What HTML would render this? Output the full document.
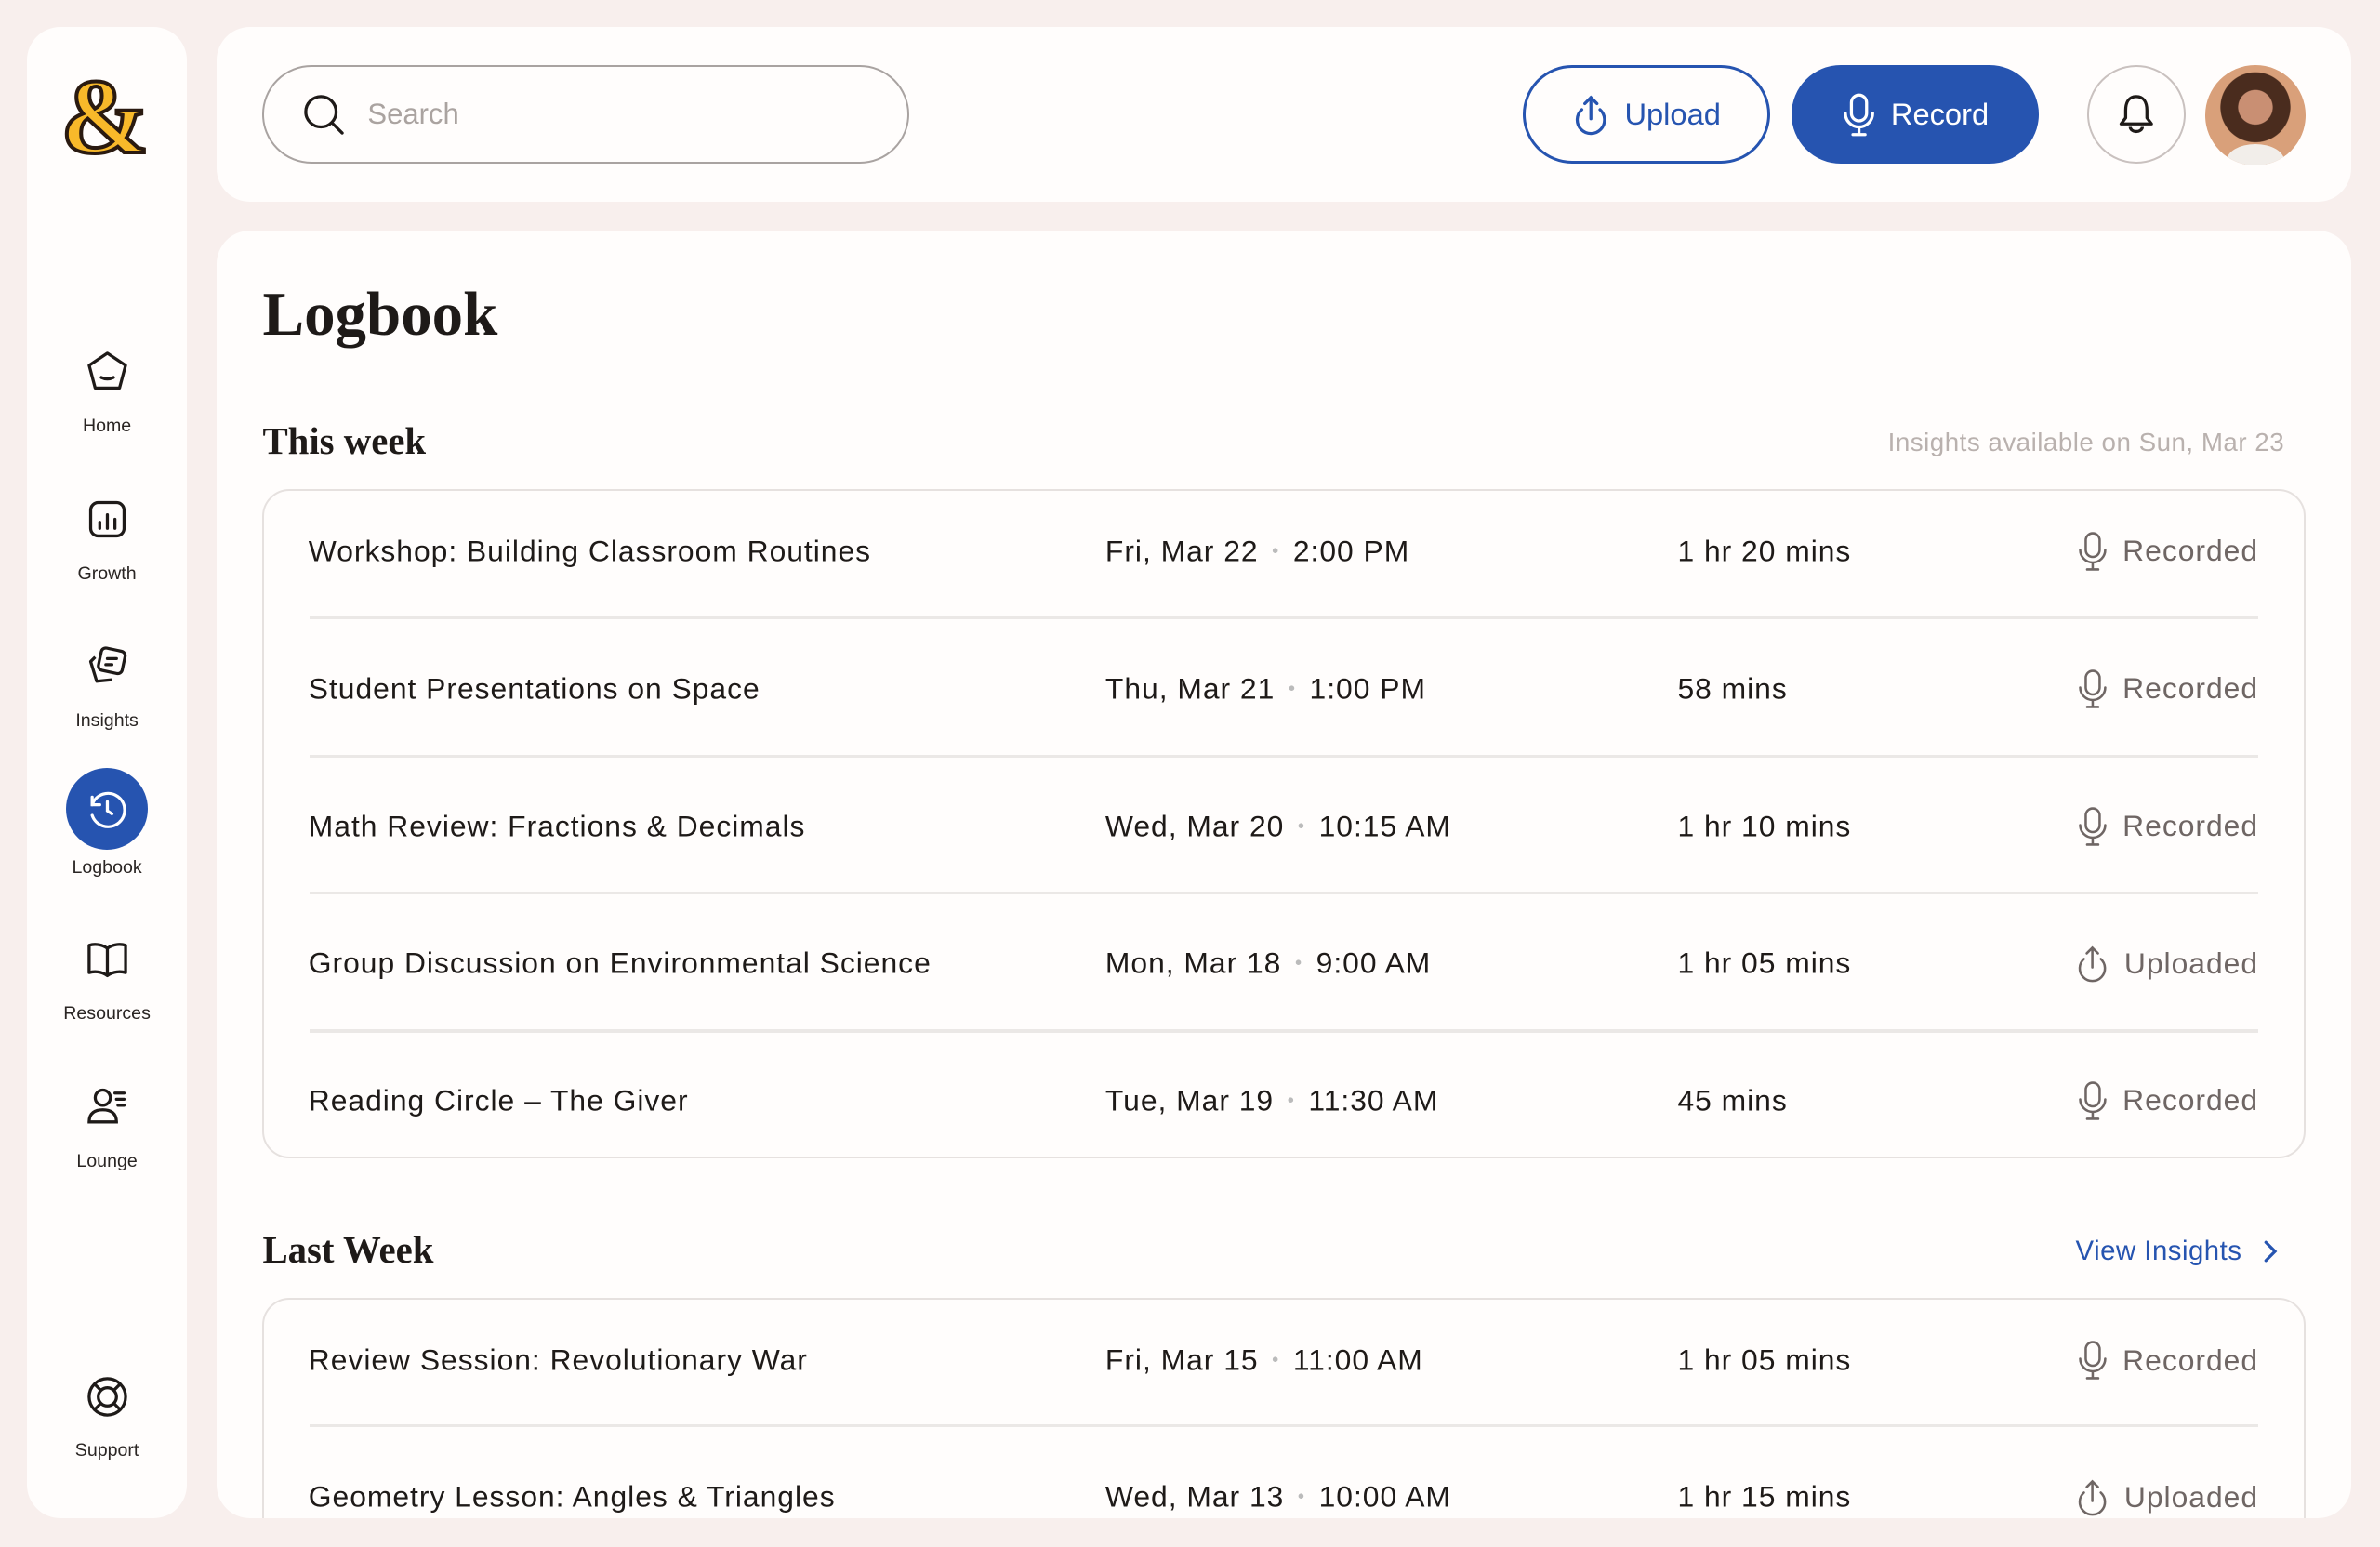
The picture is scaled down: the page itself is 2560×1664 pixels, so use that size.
<!DOCTYPE html>
<html><head><meta charset="utf-8"><style>
*{box-sizing:border-box;margin:0;padding:0}
html,body{width:2560px;height:1664px;overflow:hidden;background:#f8efed}
#w{zoom:1.632653;width:1568px;height:1019px;position:relative;overflow:hidden;font-family:"Liberation Sans",sans-serif;color:#1e1a18}
.card{position:absolute;background:#fffdfc;border-radius:22px}
.nav{position:absolute;left:0;width:105px;text-align:center;font-size:12px;color:#2a2523}
.nav svg{display:block;margin:0 auto}
.abs{position:absolute}
.row{position:absolute;left:0;right:0;height:90px;font-size:19.5px;letter-spacing:.6px}
.row span{position:absolute;top:50%;transform:translateY(-50%);white-space:nowrap}
.st{right:30px;color:#6f6664;display:flex;align-items:center;gap:9px}
.dot{color:#bbb;font-size:12px;margin:0 3px;vertical-align:3px}
.div{position:absolute;left:30px;right:30px;height:2px;background:#ebe8e6}
h2{font-family:"Liberation Serif",serif;font-weight:bold;font-size:25px;position:absolute}
</style></head><body><div id="w">
<div class="card" style="left:18px;top:18px;width:105px;height:982px">
 <div class="abs" style="left:22px;top:24px;font-family:'Liberation Serif',serif;font-weight:bold;font-size:70px;line-height:70px;color:#f8b92a;-webkit-text-stroke:2.5px #2a1a10">&amp;</div>
 <div class="nav" style="top:212px"><svg width="30" height="30" viewBox="0 0 30 30" fill="none" stroke="#1e1a18" stroke-width="2" stroke-linejoin="round"><path d="M15 3 L27 11 L23 26 H7 L3 11 Z"/><path d="M11 19 q4 2 8 0" stroke-linecap="round"/></svg><div style="margin-top:14px">Home</div></div>
 <div class="nav" style="top:309px"><svg width="30" height="30" viewBox="0 0 30 30" fill="none" stroke="#1e1a18" stroke-width="2"><rect x="4" y="4" width="22" height="22" rx="5"/><path d="M10 17v4M15 12v9M20 15v6" stroke-linecap="round"/></svg><div style="margin-top:14px">Growth</div></div>
 <div class="nav" style="top:406px"><svg width="30" height="30" viewBox="0 0 30 30" fill="none" stroke="#1e1a18" stroke-width="2" stroke-linejoin="round"><rect x="10" y="4" width="16" height="15" rx="3" transform="rotate(12 18 11)"/><path d="M7 9 L4 12 L8 25 L18 24"/><path d="M15 10h6M14 14h4" stroke-linecap="round"/></svg><div style="margin-top:14px">Insights</div></div>
 <div class="nav" style="top:488px"><div style="width:54px;height:54px;border-radius:50%;background:#2654b0;margin:0 auto;display:flex;align-items:center;justify-content:center"><svg width="30" height="30" viewBox="0 0 30 30" fill="none" stroke="#fff" stroke-width="2" stroke-linecap="round"><path d="M5 12 A11 11 0 1 1 5 19"/><path d="M5 7v5h5"/><path d="M15 10v6l3 2"/></svg></div><div style="margin-top:5px">Logbook</div></div>
 <div class="nav" style="top:599px"><svg width="30" height="30" viewBox="0 0 30 30" fill="none" stroke="#1e1a18" stroke-width="2" stroke-linejoin="round"><path d="M15 8 C11 5 6 5 3 6 V24 C6 23 11 23 15 26 C19 23 24 23 27 24 V6 C24 5 19 5 15 8 Z M15 8 V26"/></svg><div style="margin-top:14px">Resources</div></div>
 <div class="nav" style="top:696px"><svg width="30" height="30" viewBox="0 0 30 30" fill="none" stroke="#1e1a18" stroke-width="2" stroke-linecap="round"><circle cx="12" cy="9" r="5"/><path d="M3 25 c0-6 4-8 9-8s9 2 9 8z"/><path d="M20 6h6M21 10h5M22 14h4"/></svg><div style="margin-top:14px">Lounge</div></div>
 <div class="nav" style="top:887px"><svg width="30" height="30" viewBox="0 0 30 30" fill="none" stroke="#1e1a18" stroke-width="2"><circle cx="15" cy="15" r="12"/><circle cx="15" cy="15" r="6"/><path d="M6.5 6.5l4.5 4.5M23.5 6.5 19 11M6.5 23.5 11 19M23.5 23.5 19 19"/></svg><div style="margin-top:14px">Support</div></div>
</div>
<div class="card" style="left:143px;top:18px;width:1406px;height:115px">
 <div class="abs" style="left:30px;top:25px;width:426px;height:65px;border:1.5px solid #a9a3a1;border-radius:33px;display:flex;align-items:center;padding-left:24px;gap:14px;font-size:19px;color:#aaa3a0"><svg width="30" height="30" viewBox="0 0 30 30" fill="none" stroke="#1e1a18" stroke-width="2" stroke-linecap="round"><circle cx="13" cy="13" r="10"/><path d="M21 21l6 6"/></svg>Search</div>
 <div class="abs" style="left:860px;top:25px;width:163px;height:65px;border:2px solid #2654b0;border-radius:33px;display:flex;align-items:center;justify-content:center;gap:9px;font-size:20px;color:#2654b0"><svg width="26" height="28" viewBox="0 0 26 28" fill="none" stroke="#2654b0" stroke-width="2" stroke-linecap="round"><path d="M7 11 A9 9 0 1 0 19 11"/><path d="M13 17V3M9 7l4-4 4 4"/></svg>Upload</div>
 <div class="abs" style="left:1037px;top:25px;width:163px;height:65px;background:#2654b0;border-radius:33px;display:flex;align-items:center;justify-content:center;gap:9px;font-size:20px;color:#fff"><svg width="24" height="30" viewBox="0 0 24 30" fill="none" stroke="#fff" stroke-width="2" stroke-linecap="round"><rect x="7" y="2" width="10" height="17" rx="5"/><path d="M3 14a9 9 0 0 0 18 0M12 23v5M8 28h8"/></svg>Record</div>
 <div class="abs" style="left:1232px;top:25px;width:65px;height:65px;border:1.5px solid #c9c1bf;border-radius:50%;display:flex;align-items:center;justify-content:center"><svg width="28" height="30" viewBox="0 0 28 30" fill="none" stroke="#1e1a18" stroke-width="2" stroke-linejoin="round"><path d="M14 3c-5 0-7 4-7 9v5l-3 4h20l-3-4v-5c0-5-2-9-7-9z"/><path d="M10 23a4 3 0 0 0 8 0"/></svg></div>
 <div class="abs" style="left:1310px;top:25px;width:66px;height:66px;border-radius:50%;background:radial-gradient(circle at 50% 42%,#c98f73 0 22%,#4a2c1e 23% 45%,#d9a07a 46%);overflow:hidden"><div style="position:absolute;left:14px;bottom:-8px;width:38px;height:22px;background:#f2eeea;border-radius:50% 50% 0 0"></div></div>
</div>
<div class="card" style="left:143px;top:152px;width:1406px;height:848px;overflow:hidden">
 <div class="abs" style="left:30px;top:32px;font-family:'Liberation Serif',serif;font-weight:bold;font-size:41px">Logbook</div>
 <h2 style="left:30px;top:124px">This week</h2>
 <div class="abs" style="right:44px;top:130px;font-size:17px;letter-spacing:.3px;color:#b9b1ae">Insights available on Sun, Mar 23</div>
 <div class="abs" style="left:30px;top:170px;width:1346px;height:441px;border:1.5px solid #e6e1df;border-radius:18px">
  <div class="row" style="top:-5px"><span style="left:29px">Workshop: Building Classroom Routines</span><span style="left:554px">Fri, Mar 22 <b class="dot">•</b> 2:00 PM</span><span style="left:931px">1 hr 20 mins</span><span class="st"><svg width="22" height="28" viewBox="0 0 24 30" fill="none" stroke="#6f6664" stroke-width="1.7" stroke-linecap="round"><rect x="7" y="2" width="10" height="17" rx="5"/><path d="M3 14a9 9 0 0 0 18 0M12 23v5M8 28h8"/></svg>Recorded</span></div>
  <div class="div" style="top:83px"></div>
  <div class="row" style="top:85.5px"><span style="left:29px">Student Presentations on Space</span><span style="left:554px">Thu, Mar 21 <b class="dot">•</b> 1:00 PM</span><span style="left:931px">58 mins</span><span class="st"><svg width="22" height="28" viewBox="0 0 24 30" fill="none" stroke="#6f6664" stroke-width="1.7" stroke-linecap="round"><rect x="7" y="2" width="10" height="17" rx="5"/><path d="M3 14a9 9 0 0 0 18 0M12 23v5M8 28h8"/></svg>Recorded</span></div>
  <div class="div" style="top:174px"></div>
  <div class="row" style="top:176px"><span style="left:29px">Math Review: Fractions &amp; Decimals</span><span style="left:554px">Wed, Mar 20 <b class="dot">•</b> 10:15 AM</span><span style="left:931px">1 hr 10 mins</span><span class="st"><svg width="22" height="28" viewBox="0 0 24 30" fill="none" stroke="#6f6664" stroke-width="1.7" stroke-linecap="round"><rect x="7" y="2" width="10" height="17" rx="5"/><path d="M3 14a9 9 0 0 0 18 0M12 23v5M8 28h8"/></svg>Recorded</span></div>
  <div class="div" style="top:264px"></div>
  <div class="row" style="top:266.5px"><span style="left:29px">Group Discussion on Environmental Science</span><span style="left:554px">Mon, Mar 18 <b class="dot">•</b> 9:00 AM</span><span style="left:931px">1 hr 05 mins</span><span class="st"><svg width="24" height="26" viewBox="0 0 26 28" fill="none" stroke="#6f6664" stroke-width="1.7" stroke-linecap="round"><path d="M7 11 A9 9 0 1 0 19 11"/><path d="M13 17V3M9 7l4-4 4 4"/></svg>Uploaded</span></div>
  <div class="div" style="top:355px"></div>
  <div class="row" style="top:357px"><span style="left:29px">Reading Circle – The Giver</span><span style="left:554px">Tue, Mar 19 <b class="dot">•</b> 11:30 AM</span><span style="left:931px">45 mins</span><span class="st"><svg width="22" height="28" viewBox="0 0 24 30" fill="none" stroke="#6f6664" stroke-width="1.7" stroke-linecap="round"><rect x="7" y="2" width="10" height="17" rx="5"/><path d="M3 14a9 9 0 0 0 18 0M12 23v5M8 28h8"/></svg>Recorded</span></div>
 </div>
 <h2 style="left:30px;top:657px">Last Week</h2>
 <div class="abs" style="right:48px;top:662px;font-size:18px;letter-spacing:.3px;color:#2654b0;display:flex;align-items:center;gap:14px">View Insights <svg width="10" height="16" viewBox="0 0 10 16" fill="none" stroke="#2654b0" stroke-width="2" stroke-linecap="round"><path d="M2 2l6 6-6 6"/></svg></div>
 <div class="abs" style="left:30px;top:703px;width:1346px;height:300px;border:1.5px solid #e6e1df;border-radius:18px">
  <div class="row" style="top:-5px"><span style="left:29px">Review Session: Revolutionary War</span><span style="left:554px">Fri, Mar 15 <b class="dot">•</b> 11:00 AM</span><span style="left:931px">1 hr 05 mins</span><span class="st"><svg width="22" height="28" viewBox="0 0 24 30" fill="none" stroke="#6f6664" stroke-width="1.7" stroke-linecap="round"><rect x="7" y="2" width="10" height="17" rx="5"/><path d="M3 14a9 9 0 0 0 18 0M12 23v5M8 28h8"/></svg>Recorded</span></div>
  <div class="div" style="top:82px"></div>
  <div class="row" style="top:85px"><span style="left:29px">Geometry Lesson: Angles &amp; Triangles</span><span style="left:554px">Wed, Mar 13 <b class="dot">•</b> 10:00 AM</span><span style="left:931px">1 hr 15 mins</span><span class="st"><svg width="24" height="26" viewBox="0 0 26 28" fill="none" stroke="#6f6664" stroke-width="1.7" stroke-linecap="round"><path d="M7 11 A9 9 0 1 0 19 11"/><path d="M13 17V3M9 7l4-4 4 4"/></svg>Uploaded</span></div>
 </div>
</div>
</div></body></html>
